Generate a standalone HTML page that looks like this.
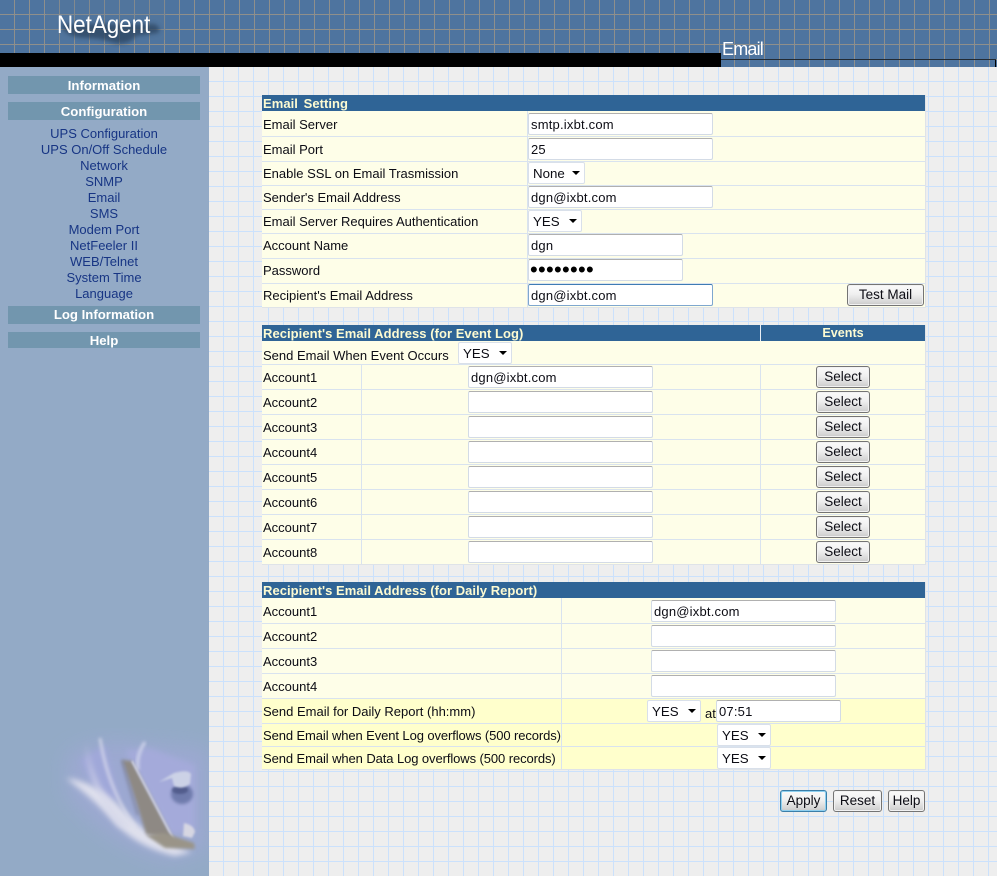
<!DOCTYPE html>
<html lang="en">
<head>
<meta charset="utf-8">
<title>NetAgent - Email</title>
<style>
html,body{margin:0;padding:0;background:#fff;}
body{width:998px;height:876px;position:relative;overflow:hidden;font:13px/16px "Liberation Sans",Arial,sans-serif;color:#0c0c14;}
div,span,input,select,button,i{box-sizing:border-box;}
#page{position:absolute;left:0;top:0;width:997px;height:876px;overflow:hidden;}
#content{position:absolute;left:209px;top:67px;width:788px;height:809px;background-color:#eeeeee;
background-image:linear-gradient(to right,transparent 14px,#cbe1fc 14px),linear-gradient(to bottom,transparent 14px,#cbe1fc 14px);background-size:15px 15px;}
#head{position:absolute;left:0;top:0;width:997px;height:67px;background-color:#4e749f;
background-image:linear-gradient(to right,transparent 14px,#8f8f8b 14px),linear-gradient(to bottom,transparent 14px,#8f8f8b 14px);background-size:15px 15px;}
#black{position:absolute;left:0;top:53px;width:721px;height:14px;background:#000;}
#hline{position:absolute;left:721px;top:59px;width:275px;height:1px;background:#222a33;}
#vline{position:absolute;left:995px;top:60px;width:1px;height:7px;background:#000;}
#logoBlob{position:absolute;left:46px;top:0;}
#logo{position:absolute;left:57px;top:10px;font:25px/30px "Liberation Sans",Arial,sans-serif;color:#fff;white-space:nowrap;transform:scaleX(.895);transform-origin:0 0;}
#pgTitle{position:absolute;left:722px;top:39px;font:18px/21px "Liberation Sans",Arial,sans-serif;color:#fff;letter-spacing:-.8px;white-space:nowrap;}
#side{position:absolute;left:0;top:67px;width:209px;height:809px;background:#93aac6;}
.bar{position:absolute;left:8px;width:192px;height:18px;background:#7296ae;color:#fff;font:bold 13.2px/18px "Liberation Sans",Arial,sans-serif;text-align:center;}
.lnk{position:absolute;left:8px;width:192px;margin-top:1px;text-align:center;color:#173584;line-height:16px;white-space:nowrap;}
#art{position:absolute;left:48px;top:728px;}
.tb{position:absolute;left:262px;width:664px;background:#fefee8;border-right:1px solid #dfe3e8;border-bottom:1px solid #dfe3e8;}
.hd{position:absolute;left:262px;width:663px;height:16px;background:#2f6496;color:#fdfbd2;font:bold 13px/17px "Liberation Sans",Arial,sans-serif;padding-left:1px;white-space:nowrap;letter-spacing:.05px;}
.sep{position:absolute;left:262px;width:663px;height:1px;background:#d9e3ef;}
.col{position:absolute;width:1px;background:#d9e3ef;}
.ye{position:absolute;left:262px;width:664px;background:#ffffcc;border-right:1px solid #dfe3e8;}
.l{position:absolute;left:263px;margin-top:1px;white-space:nowrap;line-height:16px;}
input{position:absolute;height:22px;margin:0;padding:0 0 0 2px;font:13px "Liberation Sans",Arial,sans-serif;letter-spacing:.2px;color:#0c0c14;background:#fff;border:1px solid #d3dbe6;border-top-color:#b0b0b0;border-radius:2px;outline:0;}
input.f{border:1px solid #7ea7cf;border-top-color:#3f7cb4;}
input.p{font-size:22px;letter-spacing:.3px;padding-left:1px;color:#000;}
select{position:absolute;height:22px;margin:0;padding:0 0 0 4px;font:13.3px "Liberation Sans",Arial,sans-serif;color:#0c0c14;background:#fff;border:1px solid #d9e0ea;border-radius:2px;appearance:none;-webkit-appearance:none;outline:0;}
.t{position:absolute;width:0;height:0;border-left:4px solid transparent;border-right:4px solid transparent;border-top:4px solid #000;}
button{position:absolute;margin:0;padding:0 0 2px;font:13.5px "Liberation Sans",Arial,sans-serif;color:#0c0c14;height:22px;border:1px solid #747474;border-radius:3px;background:linear-gradient(to bottom,#fafafa 0%,#f0f0f0 45%,#d6d6d6 85%,#c8c8c8 100%);box-shadow:inset 0 0 0 1px #f2f2f2;}
button.s{left:816px;width:54px;}
button.a{border:1px solid #3b7ea8;box-shadow:inset 0 0 0 1px #8fd0f0;}
</style>
</head>
<body>
<div id="page">
<div id="content"></div>

<div id="head"></div>
<svg id="logoBlob" width="125" height="50" viewBox="0 0 125 50">
<defs><filter id="b1" x="-20%" y="-40%" width="140%" height="180%"><feGaussianBlur stdDeviation="2.2"/></filter></defs>
<rect x="0" y="0" width="120" height="40" fill="#5b7897" opacity=".25"/>
<path d="M14 24 L108 24 Q116 27 112 33 L90 36 Q82 46 68 43 Q55 38 40 38 Q20 38 14 24Z" fill="#2a435d" opacity=".72" filter="url(#b1)"/>
</svg>
<div id="logo">NetAgent</div>
<div id="black"></div>
<div id="hline"></div>
<div id="vline"></div>
<div id="pgTitle">Email</div>

<div id="side"></div>
<div class="bar" style="top:76px;line-height:20px">Information</div>
<div class="bar" style="top:102px;line-height:20px">Configuration</div>
<div class="lnk" style="top:125px">UPS Configuration</div>
<div class="lnk" style="top:141px">UPS On/Off Schedule</div>
<div class="lnk" style="top:157px">Network</div>
<div class="lnk" style="top:173px">SNMP</div>
<div class="lnk" style="top:189px">Email</div>
<div class="lnk" style="top:205px">SMS</div>
<div class="lnk" style="top:221px">Modem Port</div>
<div class="lnk" style="top:237px">NetFeeler II</div>
<div class="lnk" style="top:253px">WEB/Telnet</div>
<div class="lnk" style="top:269px">System Time</div>
<div class="lnk" style="top:285px">Language</div>
<div class="bar" style="top:306px">Log Information</div>
<div class="bar" style="top:332px;height:16px;line-height:17px">Help</div>

<svg id="art" width="161" height="148" viewBox="48 728 161 148">
<defs>
<filter id="a1" x="-30%" y="-30%" width="160%" height="160%"><feGaussianBlur stdDeviation="10"/></filter>
<filter id="a2" x="-30%" y="-30%" width="160%" height="160%"><feGaussianBlur stdDeviation="3"/></filter>
<filter id="a3" x="-30%" y="-30%" width="160%" height="160%"><feGaussianBlur stdDeviation="1.7"/></filter>
<filter id="a4" x="-30%" y="-30%" width="160%" height="160%"><feGaussianBlur stdDeviation="1"/></filter>
</defs>
<path d="M66 755 Q100 735 135 742 L209 748 L209 850 L172 862 Q110 850 66 795Z" fill="#a0a8d6" opacity=".7" filter="url(#a1)"/>
<path d="M125 750 L150 748 L195 765 L195 830 L170 835Z" fill="#a6abdc" opacity=".85" filter="url(#a2)"/>
<path d="M80 760 L105 745 L120 800 L100 800Z" fill="#a2a8dc" opacity=".8" filter="url(#a2)"/>
<path d="M66 778 Q95 800 118 826 Q140 848 175 856 L192 852 Q148 838 125 812 Q98 782 66 778Z" fill="#e6e6f0" opacity=".9" filter="url(#a2)"/>
<path d="M86 742 Q92 790 132 828 L118 826 Q88 790 86 742Z" fill="#d6d8ea" opacity=".8" filter="url(#a2)"/>
<path d="M100 738 Q108 790 136 828" stroke="#dfe0ee" stroke-width="3" fill="none" opacity=".7" filter="url(#a3)"/>
<path d="M145 742 Q136 755 138 770" stroke="#cdd2ea" stroke-width="3" fill="none" filter="url(#a3)"/>
<path d="M122 760 L132 761 L174 840 L146 834 Q136 800 122 760Z" fill="#8e8880" opacity=".95" filter="url(#a3)"/>
<path d="M122 760 Q130 790 138 815" stroke="#7c8098" stroke-width="3" fill="none" opacity=".6" filter="url(#a3)"/>
<path d="M132 761 L174 840" stroke="#dfe2f2" stroke-width="1.6" fill="none" filter="url(#a4)"/>
<ellipse cx="182" cy="794" rx="11" ry="10" fill="#6a77a8" opacity=".9" filter="url(#a3)"/>
<ellipse cx="180" cy="790" rx="8" ry="4" fill="#3f4a78" opacity=".6" filter="url(#a4)"/>
<path d="M159 782 L174 773 Q188 769 191 774 L190 784 Q182 790 174 786 L172 778Z" fill="#ccd2e6" filter="url(#a4)"/>
<path d="M146 835 L164 833 L194 843 L195 849 L165 848Z" fill="#9a9488" filter="url(#a3)"/>
<path d="M184 823 Q194 825 195 832 L192 838 L183 836Z" fill="#d6d6e2" filter="url(#a4)"/>
</svg>

<!-- Email Setting -->
<div class="tb" style="top:95px;height:213px"></div>
<div class="hd" style="top:95px;word-spacing:2px">Email Setting</div>
<div class="col" style="left:527px;top:111px;height:196px"></div>
<div class="sep" style="top:136px"></div>
<div class="sep" style="top:161px"></div>
<div class="sep" style="top:185px"></div>
<div class="sep" style="top:209px"></div>
<div class="sep" style="top:233px"></div>
<div class="sep" style="top:258px"></div>
<div class="sep" style="top:283px"></div>
<div class="l" style="top:116px">Email Server</div>
<div class="l" style="top:141px">Email Port</div>
<div class="l" style="top:165px">Enable SSL on Email Trasmission</div>
<div class="l" style="top:189px">Sender's Email Address</div>
<div class="l" style="top:213px">Email Server Requires Authentication</div>
<div class="l" style="top:237px">Account Name</div>
<div class="l" style="top:262px">Password</div>
<div class="l" style="top:287px">Recipient's Email Address</div>
<input style="left:528px;top:113px;width:185px" value="smtp.ixbt.com">
<input style="left:528px;top:138px;width:185px" value="25">
<select style="left:528px;top:162px;width:57px"><option>None</option></select><i class="t" style="left:572px;top:171px"></i>
<input style="left:528px;top:186px;width:185px" value="dgn@ixbt.com">
<select style="left:528px;top:210px;width:54px"><option>YES</option></select><i class="t" style="left:569px;top:219px"></i>
<input style="left:528px;top:234px;width:155px" value="dgn">
<input class="p" type="password" style="left:528px;top:259px;width:155px" value="12345678">
<input class="f" style="left:528px;top:284px;width:185px" value="dgn@ixbt.com">
<button style="left:847px;top:284px;width:77px">Test Mail</button>

<!-- Event log -->
<div class="tb" style="top:325px;height:240px"></div>
<div class="hd" style="top:325px">Recipient's Email Address (for Event Log)</div>
<div style="position:absolute;left:760px;top:325px;width:1px;height:16px;background:#e8eef5"></div>
<div style="position:absolute;left:761px;top:325px;width:164px;height:16px;text-align:center;color:#fdfbd2;font:bold 12.6px/17px 'Liberation Sans',Arial,sans-serif">Events</div>
<div class="col" style="left:760px;top:364px;height:200px"></div>
<div class="col" style="left:361px;top:364px;height:200px"></div>
<div class="sep" style="top:364px"></div>
<div class="sep" style="top:389px"></div>
<div class="sep" style="top:414px"></div>
<div class="sep" style="top:439px"></div>
<div class="sep" style="top:464px"></div>
<div class="sep" style="top:489px"></div>
<div class="sep" style="top:514px"></div>
<div class="sep" style="top:539px"></div>
<div class="l" style="top:347px">Send Email When Event Occurs</div>
<select style="left:458px;top:342px;width:54px"><option>YES</option></select><i class="t" style="left:499px;top:351px"></i>
<div class="l" style="top:369px">Account1</div>
<div class="l" style="top:394px">Account2</div>
<div class="l" style="top:419px">Account3</div>
<div class="l" style="top:444px">Account4</div>
<div class="l" style="top:469px">Account5</div>
<div class="l" style="top:494px">Account6</div>
<div class="l" style="top:519px">Account7</div>
<div class="l" style="top:544px">Account8</div>
<input style="left:468px;top:366px;width:185px" value="dgn@ixbt.com">
<input style="left:468px;top:391px;width:185px">
<input style="left:468px;top:416px;width:185px">
<input style="left:468px;top:441px;width:185px">
<input style="left:468px;top:466px;width:185px">
<input style="left:468px;top:491px;width:185px">
<input style="left:468px;top:516px;width:185px">
<input style="left:468px;top:541px;width:185px">
<button class="s" style="top:366px">Select</button>
<button class="s" style="top:391px">Select</button>
<button class="s" style="top:416px">Select</button>
<button class="s" style="top:441px">Select</button>
<button class="s" style="top:466px">Select</button>
<button class="s" style="top:491px">Select</button>
<button class="s" style="top:516px">Select</button>
<button class="s" style="top:541px">Select</button>

<!-- Daily report -->
<div class="tb" style="top:582px;height:188px"></div>
<div class="ye" style="top:698px;height:71px"></div>
<div class="hd" style="top:582px">Recipient's Email Address (for Daily Report)</div>
<div class="col" style="left:561px;top:598px;height:171px"></div>
<div class="sep" style="top:623px"></div>
<div class="sep" style="top:648px"></div>
<div class="sep" style="top:673px"></div>
<div class="sep" style="top:698px"></div>
<div class="sep" style="top:723px"></div>
<div class="sep" style="top:746px"></div>
<div class="l" style="top:603px">Account1</div>
<div class="l" style="top:628px">Account2</div>
<div class="l" style="top:653px">Account3</div>
<div class="l" style="top:678px">Account4</div>
<div class="l" style="top:703px">Send Email for Daily Report (hh:mm)</div>
<div class="l" style="top:727px;letter-spacing:-.1px">Send Email when Event Log overflows (500 records)</div>
<div class="l" style="top:750px;letter-spacing:-.09px">Send Email when Data Log overflows (500 records)</div>
<input style="left:651px;top:600px;width:185px" value="dgn@ixbt.com">
<input style="left:651px;top:625px;width:185px">
<input style="left:651px;top:650px;width:185px">
<input style="left:651px;top:675px;width:185px">
<select style="left:647px;top:700px;width:54px"><option>YES</option></select><i class="t" style="left:688px;top:709px"></i>
<div class="l" style="left:705px;top:705px">at</div>
<input style="left:716px;top:700px;width:125px" value="07:51">
<select style="left:717px;top:724px;width:54px"><option>YES</option></select><i class="t" style="left:758px;top:733px"></i>
<select style="left:717px;top:747px;width:54px"><option>YES</option></select><i class="t" style="left:758px;top:756px"></i>

<button class="a" style="left:780px;top:790px;width:47px">Apply</button>
<button style="left:833px;top:790px;width:49px">Reset</button>
<button style="left:888px;top:790px;width:37px">Help</button>
</div>
</body>
</html>
